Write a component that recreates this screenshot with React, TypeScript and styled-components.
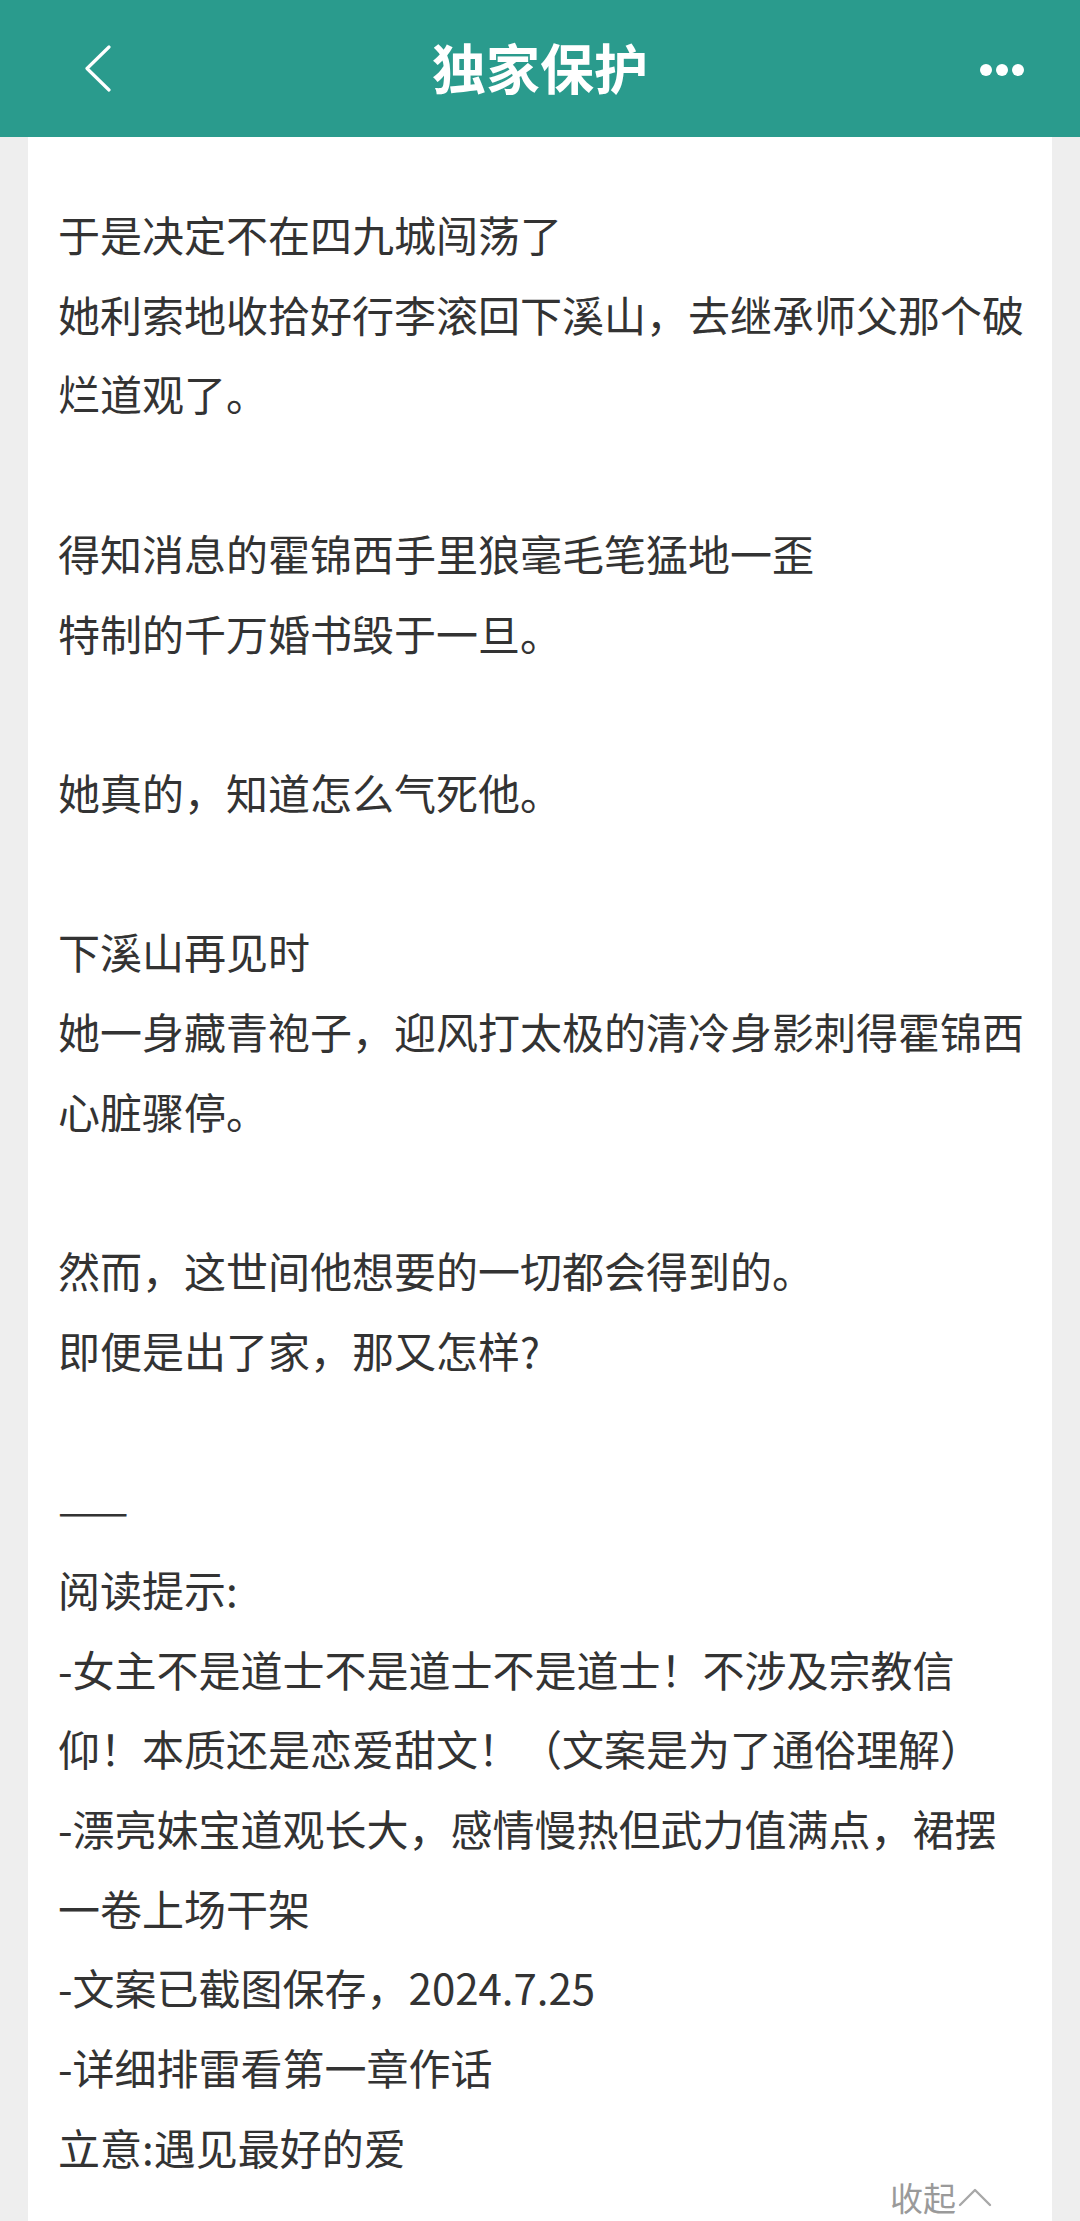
import React from 'react';
import styled, { createGlobalStyle } from 'styled-components';

const GlobalStyle = createGlobalStyle`
  html, body {
    margin: 0;
    padding: 0;
    background: #eeeeee;
  }
  body {
    font-family: "Noto Sans CJK SC", "Noto Sans", sans-serif;
  }
`;

const Page = styled.div`
  display: flex;
  flex-direction: column;
  min-height: 2221px;
  background: #eeeeee;
`;

const Header = styled.header`
  height: 137px;
  background: #2a9b8d;
  display: flex;
  align-items: center;
  justify-content: space-between;
  padding: 0 56px 0 84px;
  box-sizing: border-box;
  position: relative;
`;

const Title = styled.h1`
  position: absolute;
  left: 0;
  right: 0;
  top: 0;
  margin: 0;
  line-height: 134px;
  text-align: center;
  font-size: 54px;
  font-weight: 700;
  color: #ffffff;
  pointer-events: none;
`;

const IconButton = styled.div`
  display: flex;
  align-items: center;
  justify-content: center;
`;

const Dots = styled.div`
  display: flex;
  gap: 4px;
  margin-top: 2px;
`;

const Dot = styled.span`
  width: 12px;
  height: 12px;
  border-radius: 50%;
  background: #ffffff;
`;

const Card = styled.main`
  flex: 1;
  margin: 0 28px;
  background: #ffffff;
  padding: 57px 18px 40px 30px;
`;

const Line = styled.p`
  margin: 0;
  font-size: 42px;
  line-height: 79.7px;
  color: #333333;
`;

const Blank = styled.div`
  height: 79.7px;
`;

const Collapse = styled.div`
  display: flex;
  justify-content: flex-end;
  align-items: center;
  gap: 2px;
  margin-top: -10px;
  padding-right: 42px;
  font-size: 33px;
  line-height: 40px;
  color: #9a9a9a;
`;

const BackIcon = () => (
  <svg width="28" height="47" viewBox="0 0 28 47" fill="none">
    <polyline points="25,2 3,23.5 25,45" stroke="#ffffff" strokeWidth="3.2" strokeLinecap="round" strokeLinejoin="round" />
  </svg>
);

const CaretUp = () => (
  <svg width="34" height="20" viewBox="0 0 34 20" fill="none">
    <polyline points="2,18 17,3 32,18" stroke="#a8a8a8" strokeWidth="2.4" strokeLinecap="round" strokeLinejoin="round" />
  </svg>
);

const lines: string[] = [
  '于是决定不在四九城闯荡了',
  '她利索地收拾好行李滚回下溪山，去继承师父那个破烂道观了。',
  '',
  '得知消息的霍锦西手里狼毫毛笔猛地一歪',
  '特制的千万婚书毁于一旦。',
  '',
  '她真的，知道怎么气死他。',
  '',
  '下溪山再见时',
  '她一身藏青袍子，迎风打太极的清冷身影刺得霍锦西心脏骤停。',
  '',
  '然而，这世间他想要的一切都会得到的。',
  '即便是出了家，那又怎样?',
  '',
  '——',
  '阅读提示:',
  '-女主不是道士不是道士不是道士！不涉及宗教信仰！本质还是恋爱甜文！（文案是为了通俗理解）',
  '-漂亮妹宝道观长大，感情慢热但武力值满点，裙摆一卷上场干架',
  '-文案已截图保存，2024.7.25',
  '-详细排雷看第一章作话',
  '立意:遇见最好的爱',
];

export default function App() {
  return (
    <Page>
      <GlobalStyle />
      <Header>
        <IconButton>
          <BackIcon />
        </IconButton>
        <Title>独家保护</Title>
        <Dots>
          <Dot />
          <Dot />
          <Dot />
        </Dots>
      </Header>
      <Card>
        {lines.map((text, i) => (text === '' ? <Blank key={i} /> : <Line key={i}>{text}</Line>))}
        <Collapse>
          收起
          <CaretUp />
        </Collapse>
      </Card>
    </Page>
  );
}
